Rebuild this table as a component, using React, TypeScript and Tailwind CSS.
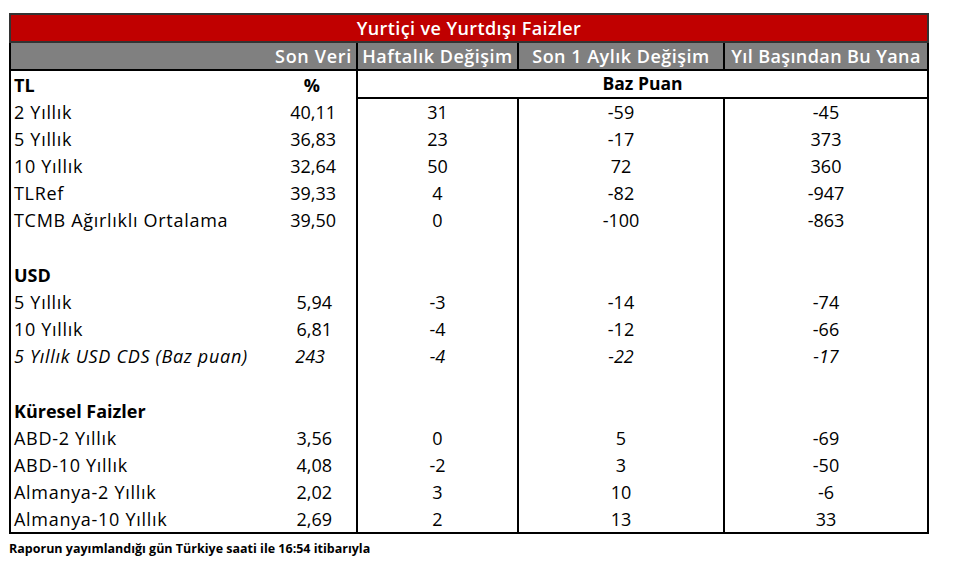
import React from "react";

type Row = {
  label: string;
  value?: string;
  c2?: string;
  c3?: string;
  c4?: string;
  bold?: boolean;
  italic?: boolean;
  pad?: string;
};

const rows: Row[] = [
  { label: "2 Yıllık", value: "40,11", c2: "31", c3: "-59", c4: "-45", pad: "pr-[20px]" },
  { label: "5 Yıllık", value: "36,83", c2: "23", c3: "-17", c4: "373", pad: "pr-[20px]" },
  { label: "10 Yıllık", value: "32,64", c2: "50", c3: "72", c4: "360", pad: "pr-[20px]" },
  { label: "TLRef", value: "39,33", c2: "4", c3: "-82", c4: "-947", pad: "pr-[20px]" },
  { label: "TCMB Ağırlıklı Ortalama", value: "39,50", c2: "0", c3: "-100", c4: "-863", pad: "pr-[20px]" },
  { label: "" },
  { label: "USD", bold: true },
  { label: "5 Yıllık", value: "5,94", c2: "-3", c3: "-14", c4: "-74", pad: "pr-[24px]" },
  { label: "10 Yıllık", value: "6,81", c2: "-4", c3: "-12", c4: "-66", pad: "pr-[24px]" },
  { label: "5 Yıllık USD CDS (Baz puan)", value: "243", c2: "-4", c3: "-22", c4: "-17", italic: true, pad: "pr-[31px]" },
  { label: "" },
  { label: "Küresel Faizler", bold: true },
  { label: "ABD-2 Yıllık", value: "3,56", c2: "0", c3: "5", c4: "-69", pad: "pr-[24px]" },
  { label: "ABD-10 Yıllık", value: "4,08", c2: "-2", c3: "3", c4: "-50", pad: "pr-[24px]" },
  { label: "Almanya-2 Yıllık", value: "2,02", c2: "3", c3: "10", c4: "-6", pad: "pr-[24px]" },
  { label: "Almanya-10 Yıllık", value: "2,69", c2: "2", c3: "13", c4: "33", pad: "pr-[24px]" },
];

export default function App() {
  return (
    <div
      className="w-[960px] h-[561px] bg-white text-black"
      style={{ fontFamily: "'Open Sans', Lato, sans-serif" }}
    >
      <div className="pt-[13px] pl-[9px]">
        <table className="table-fixed border-collapse w-[918px] text-[18px] leading-none">
          <colgroup>
            <col className="w-[241px]" />
            <col className="w-[106px]" />
            <col className="w-[161px]" />
            <col className="w-[206px]" />
            <col className="w-[204px]" />
          </colgroup>
          <tbody>
            <tr className="h-[28px] bg-[#c00000]">
              <td
                colSpan={5}
                className="border-2 border-[#333] text-center font-semibold text-white tracking-[0.4px]"
              >
                Yurtiçi ve Yurtdışı Faizler
              </td>
            </tr>
            <tr className="h-[28px] bg-[#808080] text-white font-semibold tracking-[0.5px]">
              <td colSpan={2} className="border-2 border-black text-right pr-[4px] tracking-[0.7px]">
                Son Veri
              </td>
              <td className="border-2 border-black text-center whitespace-nowrap">
                Haftalık Değişim
              </td>
              <td className="border-2 border-black text-center whitespace-nowrap">
                Son 1 Aylık Değişim
              </td>
              <td className="border-2 border-black text-center whitespace-nowrap tracking-[0.4px]">
                Yıl Başından Bu Yana
              </td>
            </tr>
            <tr className="h-[28px]">
              <td className="border-l-2 border-black pl-[3px] font-bold">TL</td>
              <td className="border-r-2 border-black text-right pr-[36px] font-bold">%</td>
              <td
                colSpan={3}
                className="border-2 border-black text-center font-bold text-[17.5px]"
              >
                Baz Puan
              </td>
            </tr>
            {rows.map((r, i) => {
              const last = i === rows.length - 1;
              const bb = last ? " border-b-2" : "";
              const it = r.italic ? " italic" : "";
              return (
                <tr key={i} className="h-[27.2px]">
                  <td
                    className={
                      "border-l-2 border-black pl-[3px] whitespace-nowrap" +
                      bb +
                      it +
                      (r.bold ? " font-bold" : " tracking-[0.7px]")
                    }
                  >
                    {r.label}
                  </td>
                  <td
                    className={
                      "border-r-2 border-black text-right " + (r.pad ?? "") + bb + it
                    }
                  >
                    {r.value}
                  </td>
                  <td className={"border-r-2 border-black text-center" + bb + it}>
                    {r.c2}
                  </td>
                  <td className={"border-r-2 border-black text-center" + bb + it}>
                    {r.c3}
                  </td>
                  <td className={"border-r-2 border-black text-center" + bb + it}>
                    {r.c4}
                  </td>
                </tr>
              );
            })}
          </tbody>
        </table>
        <div className="mt-[9px] text-[12.5px] font-bold leading-none whitespace-nowrap">
          Raporun yayımlandığı gün Türkiye saati ile 16:54 itibarıyla
        </div>
      </div>
    </div>
  );
}
